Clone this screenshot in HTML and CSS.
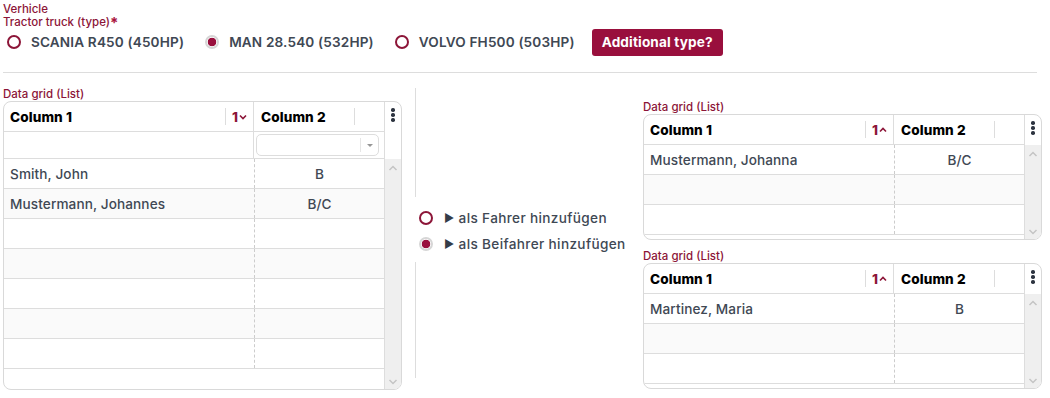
FILE: index.html
```html
<html>
<link rel="stylesheet" href="styles.css">
<head>
<title>Vehicle crew</title>
</head>
<body>

<div class='page'>
  <div class='field'>
    <div class='label'>Verhicle</div>
    <div class='label'>Tractor truck (type)<span class='req'>*</span></div>
    <div class='options'>
      <div class='option'><span class='radio'></span><span>SCANIA R450 (450HP)</span></div>
      <div class='option'><span class='radio checked'></span><span>MAN 28.540 (532HP)</span></div>
      <div class='option'><span class='radio'></span><span>VOLVO FH500 (503HP)</span></div>
      <button class='btn'>Additional type?</button>
    </div>
  </div>

  <div class='rule'></div>

  <div class='transfer'>
    <!-- source list -->
    <div class='col-left'>
      <div class='grid-label'>Data grid (List)</div>
      <div class='grid tall'>
        <div class='main'>
          <div class='row head'>
            <div class='c1'>
              <span>Column 1</span>
              <span class='handle'></span>
              <span class='sort'>1<svg width='8' height='6' viewBox='0 0 8 6'><path d='M1 1.5 L4 4.5 L7 1.5' fill='none' stroke='#8c1538' stroke-width='1.6'/></svg></span>
            </div>
            <div class='c2'><span>Column 2</span><span class='handle'></span></div>
          </div>
          <div class='row filter'>
            <div class='c1'></div>
            <div class='c2'>
              <div class='select'><span class='caret'></span></div>
            </div>
          </div>
          <div class='row'><div class='c1'>Smith, John</div><div class='c2'>B</div></div>
          <div class='row alt'><div class='c1'>Mustermann, Johannes</div><div class='c2'>B/C</div></div>
          <div class='row'><div class='c1'></div><div class='c2'></div></div>
          <div class='row alt'><div class='c1'></div><div class='c2'></div></div>
          <div class='row'><div class='c1'></div><div class='c2'></div></div>
          <div class='row alt'><div class='c1'></div><div class='c2'></div></div>
          <div class='row'><div class='c1'></div><div class='c2'></div></div>
        </div>
        <div class='side'>
          <div class='menu'><i></i><i></i><i></i></div>
          <div class='scroll'>
            <svg width='10' height='6' viewBox='0 0 10 6'><path d='M1.5 5 L5 1.5 L8.5 5' fill='none' stroke='#c4c4c4' stroke-width='1.5'/></svg>
            <svg width='10' height='6' viewBox='0 0 10 6'><path d='M1.5 1 L5 4.5 L8.5 1' fill='none' stroke='#c4c4c4' stroke-width='1.5'/></svg>
          </div>
        </div>
      </div>
    </div>

    <!-- assign as -->
    <div class='col-mid'>
      <div class='line top'></div>
      <div class='assign'>
        <div class='option'><span class='radio'></span><span class='arrow'>&#9654;</span><span>als Fahrer hinzufügen</span></div>
        <div class='option'><span class='radio checked'></span><span class='arrow'>&#9654;</span><span>als Beifahrer hinzufügen</span></div>
      </div>
      <div class='line bottom'></div>
    </div>

    <!-- target lists -->
    <div class='col-right'>
      <div>
        <div class='grid-label'>Data grid (List)</div>
        <div class='grid'>
          <div class='main'>
            <div class='row head'>
              <div class='c1'>
                <span>Column 1</span>
                <span class='handle'></span>
                <span class='sort'>1<svg width='8' height='6' viewBox='0 0 8 6'><path d='M1 4.5 L4 1.5 L7 4.5' fill='none' stroke='#8c1538' stroke-width='1.6'/></svg></span>
              </div>
              <div class='c2'><span>Column 2</span><span class='handle'></span></div>
            </div>
            <div class='row'><div class='c1'>Mustermann, Johanna</div><div class='c2'>B/C</div></div>
            <div class='row alt'><div class='c1'></div><div class='c2'></div></div>
            <div class='row'><div class='c1'></div><div class='c2'></div></div>
          </div>
          <div class='side'>
            <div class='menu'><i></i><i></i><i></i></div>
            <div class='scroll'>
              <svg width='10' height='6' viewBox='0 0 10 6'><path d='M1.5 5 L5 1.5 L8.5 5' fill='none' stroke='#c4c4c4' stroke-width='1.5'/></svg>
              <svg width='10' height='6' viewBox='0 0 10 6'><path d='M1.5 1 L5 4.5 L8.5 1' fill='none' stroke='#c4c4c4' stroke-width='1.5'/></svg>
            </div>
          </div>
        </div>
      </div>
      <div>
        <div class='grid-label'>Data grid (List)</div>
        <div class='grid'>
          <div class='main'>
            <div class='row head'>
              <div class='c1'>
                <span>Column 1</span>
                <span class='handle'></span>
                <span class='sort'>1<svg width='8' height='6' viewBox='0 0 8 6'><path d='M1 4.5 L4 1.5 L7 4.5' fill='none' stroke='#8c1538' stroke-width='1.6'/></svg></span>
              </div>
              <div class='c2'><span>Column 2</span><span class='handle'></span></div>
            </div>
            <div class='row'><div class='c1'>Martinez, Maria</div><div class='c2'>B</div></div>
            <div class='row alt'><div class='c1'></div><div class='c2'></div></div>
            <div class='row'><div class='c1'></div><div class='c2'></div></div>
          </div>
          <div class='side'>
            <div class='menu'><i></i><i></i><i></i></div>
            <div class='scroll'>
              <svg width='10' height='6' viewBox='0 0 10 6'><path d='M1.5 5 L5 1.5 L8.5 5' fill='none' stroke='#c4c4c4' stroke-width='1.5'/></svg>
              <svg width='10' height='6' viewBox='0 0 10 6'><path d='M1.5 1 L5 4.5 L8.5 1' fill='none' stroke='#c4c4c4' stroke-width='1.5'/></svg>
            </div>
          </div>
        </div>
      </div>
    </div>
  </div>
</div>

</body>
</html>
```

FILE: styles.css
```css
body{
  margin:0px;
  font-family:Inter, "Open Sans", sans-serif;
  font-size:13.6px;
  color:rgb(64,72,84);
  background:#fff;
}

.page{
  padding:3px 8px 0px 3px;
}

.label{
  font-size:11.5px;
  line-height:13px;
  font-weight:500;
  color:rgb(140,21,56);
}
.req{
  font-size:15px;
  font-weight:700;
  color:rgb(170,18,60);
  vertical-align:top;
  line-height:13px;
}

.options{
  display:flex;
  align-items:center;
  height:28px;
  margin-top:-1px;
  padding-left:4px;
  letter-spacing:0.15px;
}
.option{
  display:flex;
  align-items:center;
  gap:10px;
  margin-right:21px;
  font-weight:600;
  white-space:nowrap;
}

.radio{
  display:inline-block;
  flex-shrink:0;
  box-sizing:border-box;
  width:14px;
  height:14px;
  border-radius:50%;
  border:2px solid rgb(140,21,56);
  background:#fff;
}
.radio.checked{
  border:2px solid rgb(214,214,214);
  background:radial-gradient(circle, rgb(153,15,61) 0px, rgb(153,15,61) 4px, #fff 4.6px);
}

.btn{
  font-family:inherit;
  font-size:13.6px;
  font-weight:700;
  letter-spacing:0.15px;
  color:#fff;
  background:rgb(153,15,61);
  border:none;
  border-radius:3px;
  height:27px;
  padding:0px 10px;
  margin-left:-4px;
}

.rule{
  border-top:1px solid rgb(221,221,221);
  margin-top:16px;
  margin-right:5px;
}

.transfer{
  display:flex;
  margin-top:15px;
}

.grid-label{
  font-size:11.5px;
  line-height:13px;
  font-weight:500;
  color:rgb(140,21,56);
}

.grid{
  display:flex;
  width:399px;
  height:126px;
  box-sizing:border-box;
  border:1px solid rgb(217,217,217);
  border-radius:8px;
  overflow:hidden;
  background:#fff;
}
.grid.tall{
  height:289px;
}
.grid .main{
  width:380px;
}
.grid .row{
  display:flex;
  height:30px;
  box-sizing:border-box;
  border-bottom:1px solid rgb(221,221,221);
  font-weight:500;
  letter-spacing:0.1px;
}
.grid .row.alt{
  background:rgb(250,250,250);
}
.grid .row .c1{
  width:250px;
  display:flex;
  align-items:center;
  padding-left:6px;
  box-sizing:border-box;
}
.grid .row .c2{
  width:130px;
  display:flex;
  align-items:center;
  justify-content:center;
  box-sizing:border-box;
  border-left:1px dashed rgb(204,204,204);
}

.grid .row.head{
  font-weight:800;
  color:#000;
}
.grid .row.head .c1{
  border-right:1px solid rgb(221,221,221);
  padding-right:6px;
}
.grid .row.head .c2{
  border-left:none;
  justify-content:flex-start;
  padding-left:7px;
}
.handle{
  display:inline-block;
  width:1px;
  height:17px;
  background:rgb(221,221,221);
  margin-left:auto;
}
.grid .row.head .c2 .handle{
  margin-right:29px;
}
.sort{
  display:flex;
  align-items:center;
  margin-left:6px;
  color:rgb(140,21,56);
  font-weight:800;
  gap:1px;
}

.grid .row.filter{
  height:27px;
}
.grid .row.filter .c1{
  border-right:1px solid rgb(221,221,221);
}
.grid .row.filter .c2{
  border-left:none;
  justify-content:flex-start;
  padding-left:2px;
}
.select{
  width:123px;
  height:22px;
  box-sizing:border-box;
  border:1px solid rgb(221,221,221);
  border-radius:5px;
  display:flex;
  align-items:center;
  justify-content:flex-end;
}
.caret{
  border-left:1px solid rgb(230,230,230);
  width:17px;
  height:14px;
  position:relative;
}
.caret:after{
  content:'';
  position:absolute;
  left:6px;
  top:6px;
  border-left:3px solid transparent;
  border-right:3px solid transparent;
  border-top:3px solid rgb(150,150,150);
}

.grid .side{
  flex:1;
  display:flex;
  flex-direction:column;
  border-left:1px solid rgb(221,221,221);
}
.grid .menu{
  height:30px;
  display:flex;
  flex-direction:column;
  align-items:center;
  padding-top:6px;
  box-sizing:border-box;
  gap:1.5px;
}
.grid.tall .menu{
  height:57px;
}
.grid .menu i{
  display:block;
  width:3.5px;
  height:3.5px;
  border-radius:50%;
  background:rgb(45,52,64);
}
.grid .scroll{
  flex:1;
  background:rgb(239,239,239);
  display:flex;
  flex-direction:column;
  justify-content:space-between;
  align-items:center;
  padding:6px 0px 4px 0px;
}

.col-left{
  width:399px;
  flex-shrink:0;
}

.col-mid{
  width:241px;
  flex-shrink:0;
  display:flex;
  flex-direction:column;
  padding-bottom:12px;
}
.col-mid .line{
  margin-left:13px;
  border-left:1px solid rgb(221,221,221);
}
.col-mid .line.top{
  height:109px;
}
.col-mid .line.bottom{
  flex:1;
}
.assign{
  padding:8px 0px 5px 17px;
}
.assign .option{
  height:26px;
  gap:0px;
  font-weight:500;
  letter-spacing:0.35px;
}
.assign .arrow{
  font-size:11px;
  margin-left:11px;
  margin-right:4px;
  color:rgb(52,60,72);
}

.col-right{
  flex-shrink:0;
  display:flex;
  flex-direction:column;
  gap:10px;
  padding-top:13px;
}
```
